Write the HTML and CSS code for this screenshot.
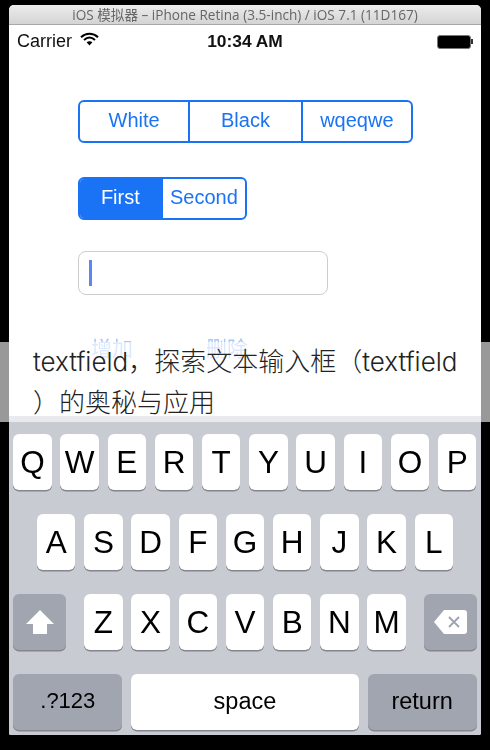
FILE: index.html
```html
<!DOCTYPE html>
<html lang="zh">
<head>
<meta charset="utf-8">
<title>textfield</title>
<link rel="stylesheet" href="styles.css">
</head>
<body>
<div class="window">
  <header class="titlebar">iOS 模拟器 – iPhone Retina (3.5-inch) / iOS 7.1 (11D167)</header>
  <div class="status">
    <div class="status-left">
      <span>Carrier</span>
      <svg class="wifi" width="19" height="14" viewBox="0 0 19 14"><path d="M1 5.2C6 .6 13 .6 18 5.2M4 8C7.4 5 11.6 5 15 8" fill="none" stroke="#000" stroke-width="2"/><path d="M9.5 13.5 6.6 10.3C8.3 8.9 10.7 8.9 12.4 10.3Z" fill="#000"/></svg>
    </div>
    <div class="status-time">10:34 AM</div>
    <div class="status-right">
      <span class="battery"></span><span class="battery-tip"></span>
    </div>
  </div>
  <main class="content">
    <div class="segmented seg-wide">
      <div class="seg">White</div>
      <div class="seg">Black</div>
      <div class="seg">wqeqwe</div>
    </div>
    <div class="segmented seg-narrow">
      <div class="seg seg-on">First</div>
      <div class="seg">Second</div>
    </div>
    <div class="field"><span class="caret"></span></div>
    <div class="actions">
      <span class="action">增加</span>
      <span class="action">删除</span>
    </div>
  </main>
  <section class="keyboard">
    <div class="row">
      <div class="key">Q</div><div class="key">W</div><div class="key">E</div><div class="key">R</div><div class="key">T</div><div class="key">Y</div><div class="key">U</div><div class="key">I</div><div class="key">O</div><div class="key">P</div>
    </div>
    <div class="row row-center">
      <div class="key">A</div><div class="key">S</div><div class="key">D</div><div class="key">F</div><div class="key">G</div><div class="key">H</div><div class="key">J</div><div class="key">K</div><div class="key">L</div>
    </div>
    <div class="row row-split">
      <div class="key key-dark key-side">
        <svg width="28" height="24" viewBox="0 0 28 24"><path d="M14 0 28 14H21V24H7V14H0Z" fill="#fff"/></svg>
      </div>
      <div class="letters">
        <div class="key">Z</div><div class="key">X</div><div class="key">C</div><div class="key">V</div><div class="key">B</div><div class="key">N</div><div class="key">M</div>
      </div>
      <div class="key key-dark key-side">
        <svg width="33" height="24" viewBox="0 0 33 24"><path d="M10 0H30Q33 0 33 3V21Q33 24 30 24H10L0 12Z" fill="#fff"/><path d="M15 7 25 17M25 7 15 17" stroke="#a0a3ae" stroke-width="1.8"/></svg>
      </div>
    </div>
    <div class="row row-bottom">
      <div class="key key-dark key-wide key-label key-num">.?123</div>
      <div class="key key-space key-label">space</div>
      <div class="key key-dark key-wide key-label">return</div>
    </div>
  </section>
</div>
<div class="banner"><div class="banner-text"><span class="latin">textfield</span>，探索文本输入框（<span class="latin">textfield</span><br>）的奥秘与应用</div></div>
</body>
</html>
```

FILE: styles.css
```css
* { box-sizing: border-box; }
html, body { margin: 0; height: 100%; }
body {
  width: 490px;
  height: 750px;
  background: #000;
  padding: 5px 9px 15px 9px;
  overflow: hidden;
  position: relative;
  font-family: "Liberation Sans", "Noto Sans CJK SC", sans-serif;
}
.window {
  height: 730px;
  display: flex;
  flex-direction: column;
  background: #fff;
  border-radius: 5px 5px 2px 2px;
  overflow: hidden;
  filter: blur(0.35px);
}
.titlebar {
  height: 20px;
  flex: none;
  background: linear-gradient(#ececec, #d4d4d4);
  border-bottom: 1px solid #a8a8a8;
  color: #666;
  font: 13.6px/20px "Open Sans", "Noto Sans CJK SC", sans-serif;
  text-align: center;
  white-space: nowrap;
}
.status {
  height: 33px;
  flex: none;
  display: grid;
  grid-template-columns: 1fr auto 1fr;
  align-items: center;
  padding: 0 8px;
  font-size: 18px;
  color: #111;
}
.status-left { display: flex; align-items: center; gap: 8px; }
.wifi { margin-top: -5px; }
.status-time { font-weight: 700; font-size: 17.4px; }
.status-right { display: flex; justify-content: flex-end; align-items: center; }
.battery { width: 34px; height: 14px; background: #000; border: 1px solid #777; border-radius: 3px; }
.battery-tip { width: 2px; height: 5px; background: #333; }
.content {
  flex: 1;
  display: flex;
  flex-direction: column;
  align-items: flex-start;
  padding: 42px 0 0 69px;
}
.segmented {
  display: grid;
  height: 43px;
  border: 2px solid #1a73f5;
  border-radius: 6px;
  overflow: hidden;
  color: #1a73f5;
  font-size: 20px;
}
.seg-wide { width: 335px; grid-template-columns: 108.3px 112.4px 1fr; }
.seg-narrow { width: 169px; margin-top: 34px; grid-template-columns: 80.7px 1fr; }
.seg {
  display: flex;
  align-items: center;
  justify-content: center;
  padding-bottom: 3px;
  border-left: 2px solid #1a73f5;
  white-space: nowrap;
}
.seg:first-child { border-left: 0; }
.seg-on { background: #1a73f5; color: #fff; }
.field {
  width: 250px;
  height: 44px;
  margin-top: 31px;
  border: 1px solid #cdcdcd;
  border-radius: 8px;
  padding: 8px 0 0 10px;
}
.caret { display: block; width: 3px; height: 26px; background: #5f86ef; }
.actions {
  display: flex;
  gap: 73px;
  margin: 41px 0 0 13px;
  color: #a9c8f7;
  font-size: 21px;
  line-height: 26px;
}
.keyboard {
  flex: none;
  height: 319px;
  background: #c8cbd2;
  display: flex;
  flex-direction: column;
  gap: 24px;
  padding: 18px 4.4px 0 4.3px;
}
.row { display: flex; gap: 8.8px; }
.row-center { justify-content: center; }
.row-split { justify-content: space-between; }
.letters { display: flex; gap: 8.8px; }
.key {
  width: 38.4px;
  height: 56px;
  flex: none;
  background: #fff;
  border-radius: 6px;
  box-shadow: 0 1.5px 0 #85868b;
  display: flex;
  align-items: center;
  justify-content: center;
  color: #000;
  font-size: 31.5px;
}
.key-dark { background: #a1a5b0; }
.key-side { width: 53px; }
.key-wide { width: 109px; }
.key-space { flex: 1; }
.key-label { font-size: 23.5px; padding-bottom: 2px; }
.key-num { font-size: 22px; }
.banner {
  position: absolute;
  left: 0;
  top: 342px;
  width: 490px;
  height: 80px;
  background: rgba(255, 255, 255, 0.6);
  color: #222;
  padding: 0 0 0 33px;
  white-space: nowrap;
  font: 300 26px/41px "Noto Sans CJK SC", sans-serif;
}
.banner-text { margin-top: -3px; }
.latin { font-family: Inter, sans-serif; font-size: 26px; line-height: 1; }
```
